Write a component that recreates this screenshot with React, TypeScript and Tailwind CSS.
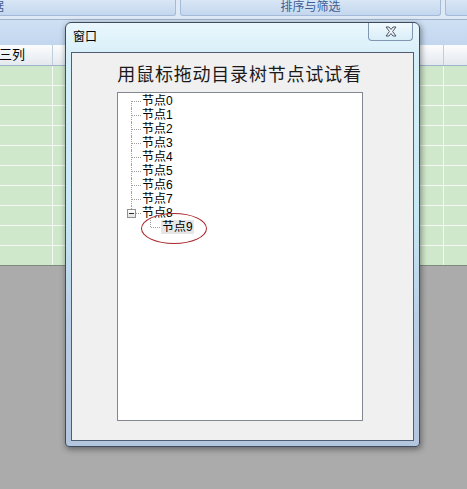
import React from "react";

const rows = ["节点0", "节点1", "节点2", "节点3", "节点4", "节点5", "节点6", "节点7"];

function RootRow({ label, first, last }: { label: string; first?: boolean; last?: boolean }) {
  return (
    <div className="flex h-[14px] items-center">
      <div className="relative h-[14px] w-[24px] shrink-0">
        {last ? (
          <>
            <div className="absolute left-[13px] top-0 h-[3px] border-l border-dotted border-[#a0a0a0]" />
            <div className="absolute left-[9px] top-[3px] flex h-[9px] w-[9px] items-center justify-center border border-[#919191] bg-[linear-gradient(to_bottom,#ffffff,#e2e2e2)]">
              <div className="h-px w-[5px] bg-[#2a2a2a]" />
            </div>
            <div className="absolute left-[18px] top-[7px] w-[5px] border-t border-dotted border-[#a0a0a0]" />
          </>
        ) : (
          <>
            <div
              className={
                first
                  ? "absolute left-[13px] top-[7px] h-[7px] border-l border-dotted border-[#a0a0a0]"
                  : "absolute left-[13px] top-0 h-[14px] border-l border-dotted border-[#a0a0a0]"
              }
            />
            <div className="absolute left-[14px] top-[7px] w-[9px] border-t border-dotted border-[#a0a0a0]" />
          </>
        )}
      </div>
      <span className="text-[12px] leading-[14px] text-black">{label}</span>
    </div>
  );
}

export default function App() {
  return (
    <div className="relative h-[489px] w-[467px] overflow-hidden bg-[#ababab] font-['Liberation_Sans','Noto_Sans_CJK_SC',sans-serif]">
      {/* ribbon group labels */}
      <div className="flex h-[19px] gap-[4px] bg-[#dfe9f5]">
        <div className="h-[16px] w-[176px] overflow-hidden rounded-br-[3px] border-b border-r border-[#a3bad8] bg-[linear-gradient(to_bottom,#d9e6f5,#c4d7ef)]">
          <span className="ml-[-8px] block text-[12px] leading-[15px] text-[#3e5e92]">据</span>
        </div>
        <div className="flex h-[16px] w-[261px] items-center justify-center rounded-b-[3px] border-x border-b border-[#a3bad8] bg-[linear-gradient(to_bottom,#d9e6f5,#c4d7ef)]">
          <span className="text-[12px] leading-[15px] text-[#3e5e92]">排序与筛选</span>
        </div>
        <div className="h-[16px] flex-1 rounded-bl-[3px] border-b border-l border-[#a3bad8] bg-[linear-gradient(to_bottom,#d9e6f5,#c4d7ef)]" />
      </div>
      <div className="h-px bg-[#9fb3cc]" />
      <div className="h-[25px] bg-[linear-gradient(to_bottom,#cfe0f3,#c2d6ee)]" />
      {/* header row */}
      <div className="flex h-[21px] border-b border-[#9db3c9] bg-[linear-gradient(to_bottom,#fbfcfd,#e4e9ef)]">
        <div className="flex w-[53px] items-center border-r border-[#c0cddb]">
          <span className="ml-[-1px] text-[13px] leading-[16px] text-black">三列</span>
        </div>
        <div className="w-[391px] border-r border-[#c0cddb]" />
        <div className="flex-1" />
      </div>
      {/* green rows */}
      {Array.from({ length: 10 }).map((_, i) => (
        <div
          key={i}
          className={
            i === 9
              ? "flex h-[20px] border-b border-[#7f8a7f] bg-[#cfe7cb]"
              : "flex h-[20px] border-b border-[#f4faf3] bg-[#cfe7cb]"
          }
        >
          <div className="w-[53px] border-r border-[#f4faf3]" />
          <div className="w-[391px] border-r border-[#f4faf3]" />
          <div className="flex-1" />
        </div>
      ))}

      {/* window */}
      <div className="absolute left-[65px] top-[22px] flex h-[425px] w-[355px] flex-col rounded-t-[6px] rounded-b-[4px] border border-[#3d4b5e] bg-[linear-gradient(to_bottom,#eaf7fd_0%,#d6eff9_8%,#c6e8f5_45%,#b9cfe6_70%,#b3c6de_100%)] px-[5px] pb-[5px] shadow-[1px_2px_6px_rgba(0,0,0,0.45)]">
        <div className="flex h-[29px] shrink-0 items-start">
          <span className="ml-[2px] mt-[7px] text-[12px] leading-[14px] text-black">窗口</span>
          <div className="flex-1" />
          <div className="mr-px flex h-[18px] w-[45px] items-center justify-center rounded-b-[4px] border-x border-b border-[#8196b0] bg-[linear-gradient(to_bottom,rgba(255,255,255,0.35),rgba(210,232,245,0.5))]">
            <svg width="14" height="11" viewBox="0 0 14 11">
              <path
                d="M2 1 L5 1 L7 3.5 L9 1 L12 1 L8.6 5.5 L12 10 L9 10 L7 7.5 L5 10 L2 10 L5.4 5.5 Z"
                fill="#f4f6f8"
                stroke="#4a5566"
                strokeWidth="1"
                strokeLinejoin="round"
              />
            </svg>
          </div>
        </div>
        <div className="flex h-[389px] w-[343px] flex-col border border-[#4f5e72] bg-[#f0f0f0]">
          <div className="pr-[6px] pt-[10px] text-center text-[18px] leading-[24px] tracking-[0.8px] text-[#1a1a1a]">
            用鼠标拖动目录树节点试试看
          </div>
          <div className="relative ml-[45px] mt-[5px] h-[329px] w-[246px] border border-[#828790] bg-white pt-px">
            {rows.map((r, i) => (
              <RootRow key={r} label={r} first={i === 0} />
            ))}
            <RootRow label="节点8" last />
            <div className="flex h-[14px] items-center">
              <div className="relative h-[14px] w-[43px] shrink-0">
                <div className="absolute left-[32px] top-0 h-[7px] border-l border-dotted border-[#a0a0a0]" />
                <div className="absolute left-[33px] top-[7px] w-[9px] border-t border-dotted border-[#a0a0a0]" />
              </div>
              <span className="bg-[#e6e6e6] px-px text-[12px] leading-[14px] text-black">节点9</span>
            </div>
            <div className="absolute left-[23px] top-[120px] h-[31px] w-[66px] rounded-[50%] border border-[#a8262b]" />
          </div>
        </div>
      </div>
    </div>
  );
}
